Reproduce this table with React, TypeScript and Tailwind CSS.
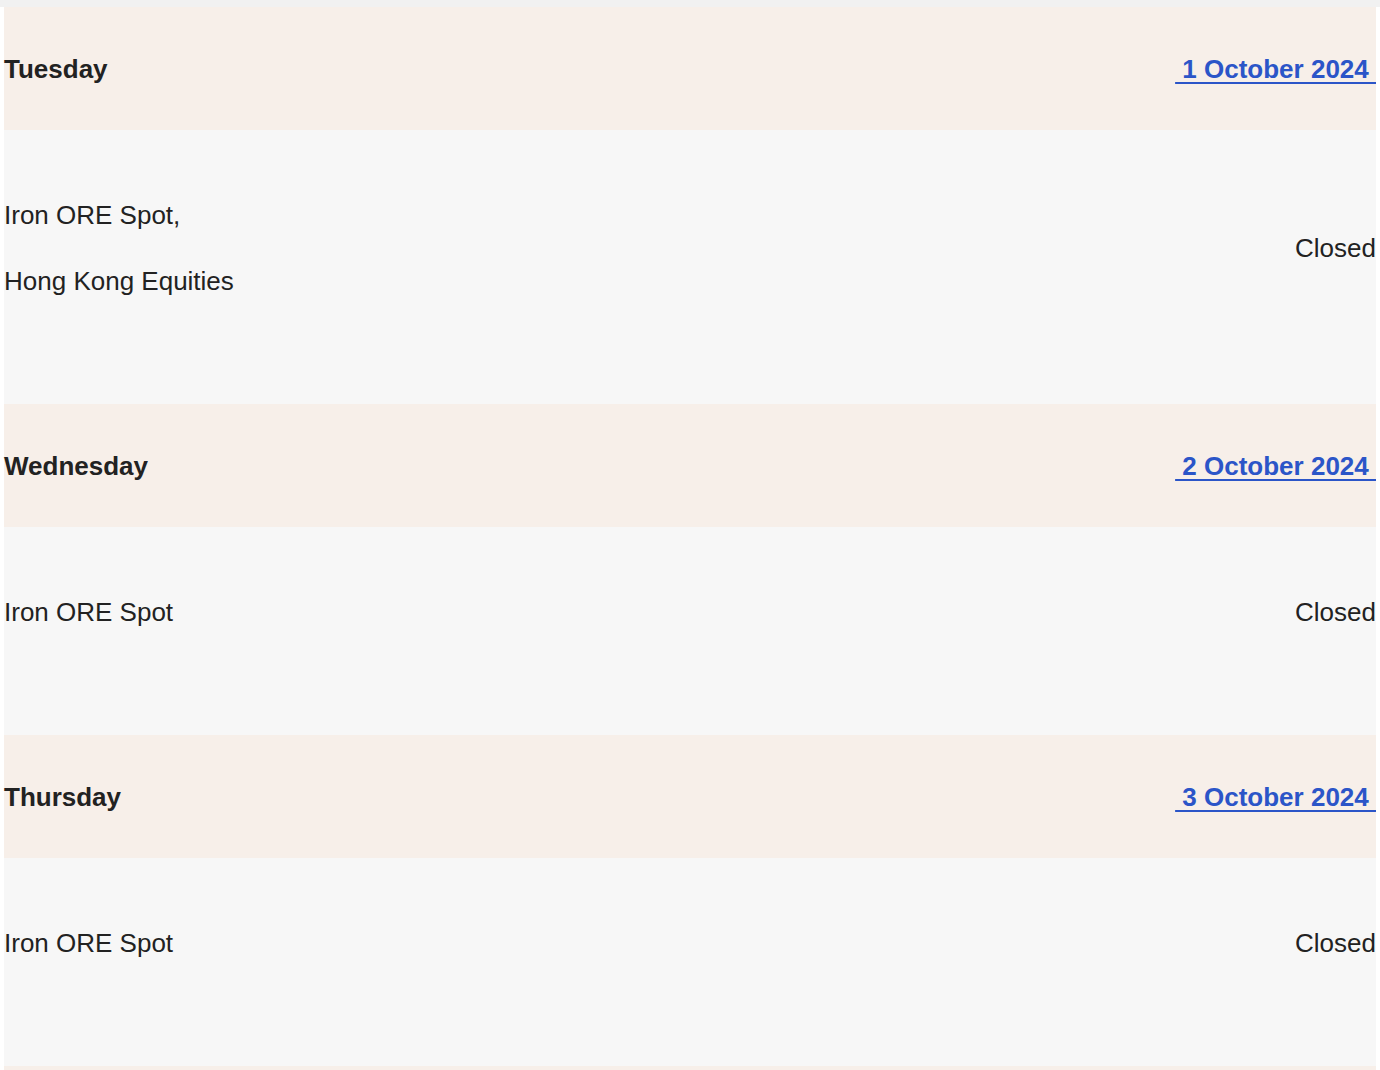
const days = [
  { day: "Tuesday", date: "1 October 2024", markets: ["Iron ORE Spot,", "Hong Kong Equities"], status: "Closed" },
  { day: "Wednesday", date: "2 October 2024", markets: ["Iron ORE Spot"], status: "Closed" },
  { day: "Thursday", date: "3 October 2024", markets: ["Iron ORE Spot"], status: "Closed" },
];

function DayHeader({ day, date }: { day: string; date: string }) {
  return (
    <div className="flex h-[123px] items-center justify-between bg-[#f7efe9] pt-[2px]">
      <span className="text-[26px] font-bold text-[#222]">{day}</span>
      <a href="#" className="whitespace-pre text-[26px] font-bold text-[#2b55c8] underline underline-offset-[4px]">
        {` ${date} `}
      </a>
    </div>
  );
}

function DayBody({ markets, status }: { markets: string[]; status: string }) {
  return (
    <div className="bg-[#f7f7f7] pb-[108px] pt-[70px]">
      <div className="flex items-center justify-between text-[26px] text-[#222]">
        <div className="flex flex-col gap-[36px]">
          {markets.map((m) => (
            <p key={m} className="leading-[30px]">
              {m}
            </p>
          ))}
        </div>
        <span className="leading-[30px]">{status}</span>
      </div>
    </div>
  );
}

export default function App() {
  return (
    <div className="min-h-screen bg-white font-['Liberation_Sans',Arial,sans-serif]">
      <div className="h-[7px] bg-[#f1f1f1]" />
      <div className="mx-1">
        {days.map((d) => (
          <section key={d.day}>
            <DayHeader day={d.day} date={d.date} />
            <DayBody markets={d.markets} status={d.status} />
          </section>
        ))}
        <div className="h-10 bg-[#f7efe9]" />
      </div>
    </div>
  );
}
